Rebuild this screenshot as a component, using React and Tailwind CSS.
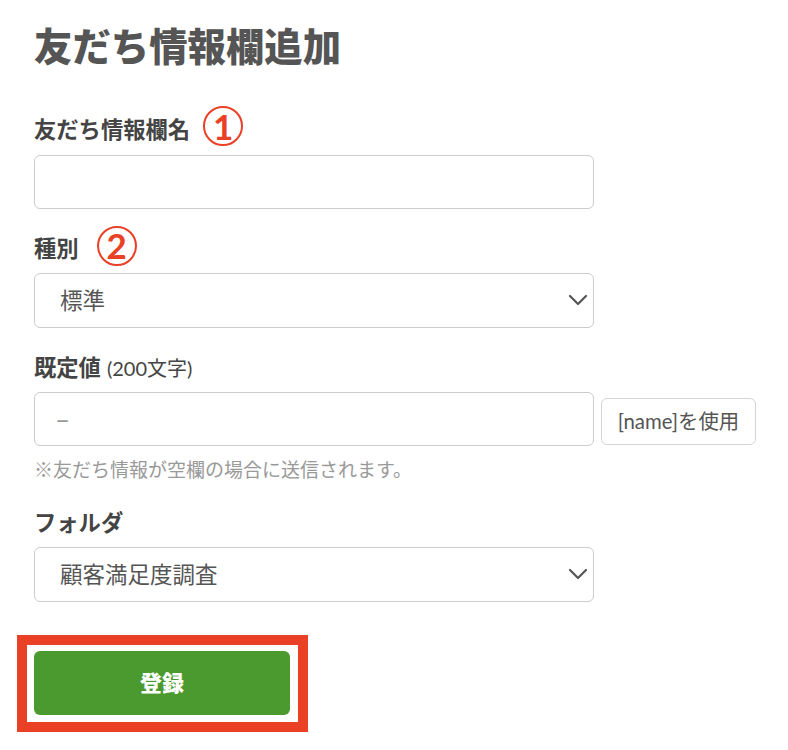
import React from "react";
import { ChevronDown } from "lucide-react";

const Badge = ({ children, className }) => (
  <span
    className={`flex h-[40px] w-[40px] items-center justify-center rounded-full border-2 border-[#ea4025] text-[35px] font-bold leading-none text-[#ea4025] ${className}`}
  >
    {children}
  </span>
);

const Select = ({ value }) => (
  <div className="relative h-[55px] w-[560px]">
    <select
      defaultValue={value}
      className="h-full w-full appearance-none rounded-md border border-[#cccccc] bg-white pl-[25px] text-[22.5px] text-[#555555] outline-none"
    >
      <option>{value}</option>
    </select>
    <ChevronDown
      size={32}
      strokeWidth={1.6}
      className="pointer-events-none absolute right-0 top-[11px] text-[#555555]"
    />
  </div>
);

const App = () => {
  return (
    <div
      className="h-[750px] w-[788px] overflow-hidden bg-white pl-[34px] pt-[22px] text-[#444444]"
      style={{ fontFamily: '"Lato", "Noto Sans CJK JP", sans-serif' }}
    >
      <h1 className="h-[48px] text-[38.4px] font-black leading-[48px] text-[#555555]">
        友だち情報欄追加
      </h1>

      <div className="mt-[36px] flex h-[49px] items-center">
        <label className="text-[22.3px] font-bold leading-none">友だち情報欄名</label>
        <Badge className="ml-[13px] -mt-[9px]">1</Badge>
      </div>
      <input className="block h-[54px] w-[560px] rounded-md border border-[#cccccc] bg-white outline-none" />

      <div className="mt-[16px] flex h-[48px] items-center">
        <label className="text-[22.3px] font-bold leading-none">種別</label>
        <Badge className="ml-[18px] -mt-[7px]">2</Badge>
      </div>
      <Select value="標準" />

      <div className="mt-[20px] flex h-[40px] items-center gap-[6px]">
        <label className="text-[22.3px] font-bold leading-none">既定値</label>
        <span className="text-[20px] leading-none">(200文字)</span>
      </div>
      <div className="mt-[4px] flex items-center gap-[7px]">
        <input
          placeholder="–"
          className="block h-[54px] w-[560px] rounded-md border border-[#cccccc] bg-white pl-[20px] text-[26px] outline-none placeholder:text-[#999999]"
        />
        <button className="mt-[5px] h-[47px] w-[155px] rounded-md border border-[#d5d5d5] bg-white text-[20.4px] text-[#555555]">
          [name]を使用
        </button>
      </div>
      <p className="mt-[11px] text-[19px] leading-[26px] text-[#999999]">
        ※友だち情報が空欄の場合に送信されます。
      </p>

      <div className="mt-[18px] flex h-[44px] items-center">
        <label className="text-[22.3px] font-bold leading-none">フォルダ</label>
      </div>
      <div className="mt-[2px]">
        <Select value="顧客満足度調査" />
      </div>

      <div className="-ml-[17px] mt-[33px] h-[97px] w-[291px] border-[10px] border-[#ea4025] bg-white pl-[7px] pt-[6px]">
        <button className="h-[64px] w-[256px] rounded-md bg-[#4a9a2f] pb-[2px] text-[22px] font-black text-white">
          登録
        </button>
      </div>
    </div>
  );
};

export default App;
